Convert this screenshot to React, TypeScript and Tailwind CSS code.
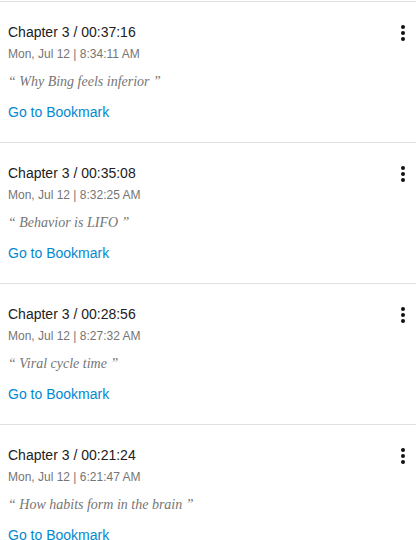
import React from 'react'

interface Bookmark {
  chapter: number
  time: string
  date: string
  note: string
}

const BOOKMARKS: Bookmark[] = [
  { chapter: 3, time: '00:37:16', date: 'Mon, Jul 12 | 8:34:11 AM', note: 'Why Bing feels inferior' },
  { chapter: 3, time: '00:35:08', date: 'Mon, Jul 12 | 8:32:25 AM', note: 'Behavior is LIFO' },
  { chapter: 3, time: '00:28:56', date: 'Mon, Jul 12 | 8:27:32 AM', note: 'Viral cycle time' },
  { chapter: 3, time: '00:21:24', date: 'Mon, Jul 12 | 6:21:47 AM', note: 'How habits form in the brain' },
]

function MoreVert() {
  return (
    <svg className="w-6 h-6 block" viewBox="0 0 24 24" fill="currentColor">
      <circle cx="12" cy="6" r="2" />
      <circle cx="12" cy="12" r="2" />
      <circle cx="12" cy="18" r="2" />
    </svg>
  )
}

function BookmarkCard({ item }: { item: Bookmark }) {
  return (
    <div className="border-t border-[#e0e0e0] pl-2 pr-[1px] pt-5 pb-[20px]">
      <div className="flex items-start justify-between">
        <div className="flex flex-col">
          <div className="text-[14px] leading-[20px] text-[#212121]">
            Chapter {item.chapter} / {item.time}
          </div>
          <div className="mt-[4px] text-[12px] leading-[16px] text-[#757575]">{item.date}</div>
        </div>
        {/* overflow menu */}
        <button className="-mt-[1px] text-[#111] bg-transparent" aria-label="More">
          <MoreVert />
        </button>
      </div>
      <div
        className="mt-[10px] text-[14px] leading-[20px] italic text-[#757575]"
        style={{ fontFamily: '"Liberation Serif", "Times New Roman", serif' }}
      >
        “ {item.note} ”
      </div>
      <a href="#" className="block mt-[10px] text-[14px] leading-[20px] text-[#0288d1]">
        Go to Bookmark
      </a>
    </div>
  )
}

export default function App() {
  return (
    <div
      className="w-[416px] h-[540px] overflow-hidden bg-white pt-px"
      style={{ fontFamily: '"Liberation Sans", Arial, sans-serif' }}
    >
      {BOOKMARKS.map((b) => (
        <BookmarkCard key={b.time} item={b} />
      ))}
    </div>
  )
}
